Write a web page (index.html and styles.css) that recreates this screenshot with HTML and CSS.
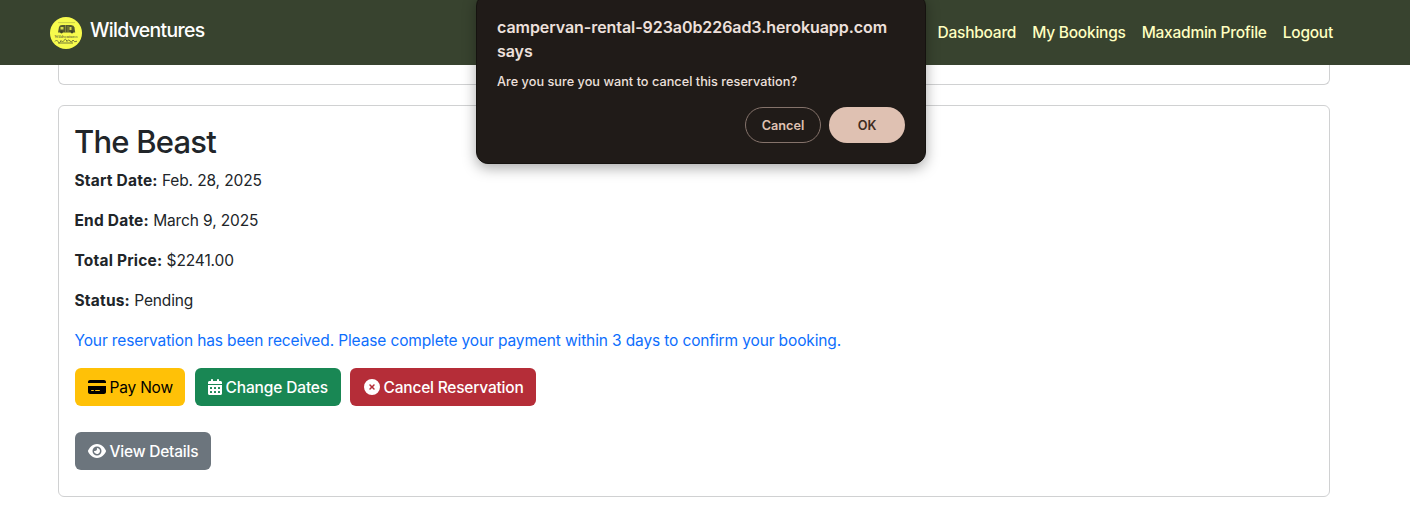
FILE: index.html
```html
<!DOCTYPE html>
<html lang="en">
<head>
<meta charset="utf-8">
<title>Wildventures</title>
<link rel="stylesheet" href="styles.css">
</head>
<body>
<header class="navbar">
  <a class="brand">
    <svg class="logo" viewBox="0 0 32 32">
      <circle cx="16" cy="16" r="16" fill="#f7fb4d"/>
      <path d="M8 5.600h17" stroke="#b9bd45" stroke-width=".7"/>
      <path d="M8 15.500l1-5.500q.5-1.800 3-2h9q3 .2 3.500 2.500l.7 5z" fill="#55592f"/>
      <path d="M10.500 10h3v2.500h-3zM19.500 10h2v3h-2z" fill="#d6da4b"/>
      <path d="M15.500 8v7M18 9v6" stroke="#92963c" stroke-width=".8"/>
      <circle cx="11.500" cy="15" r="1.400" fill="#3d4228"/><circle cx="22" cy="15" r="1.400" fill="#3d4228"/>
      <text x="16" y="20.800" text-anchor="middle" textLength="23" class="logo-text">Wildventures</text>
      <path d="M5 24.500q1.500-3 3 0t3-1q1.500 3 3 0t3 1q1.500-3 3-.5t3-1q1.500 3 4 1.200M8 26h15" fill="none" stroke="#6a6e34" stroke-width=".9"/>
    </svg>
    <span class="brand-name">Wildventures</span>
  </a>
  <nav class="links">
    <a>Dashboard</a><a>My Bookings</a><a>Maxadmin Profile</a><a>Logout</a>
  </nav>
</header>
<main class="container">
  <section class="card card-prev"></section>
  <section class="card">
    <h2>The Beast</h2>
    <p><strong>Start Date:</strong> Feb. 28, 2025</p>
    <p><strong>End Date:</strong> March 9, 2025</p>
    <p><strong>Total Price:</strong> $2241.00</p>
    <p><strong>Status:</strong> Pending</p>
    <p class="notice">Your reservation has been received. Please complete your payment within 3 days to confirm your booking.</p>
    <div class="actions">
      <button class="btn pay"><svg class="wide" viewBox="0 0 576 512"><path d="M64 32C28.700 32 0 60.700 0 96l0 32 576 0 0-32c0-35.300-28.700-64-64-64L64 32zM576 224L0 224 0 416c0 35.300 28.700 64 64 64l448 0c35.300 0 64-28.700 64-64l0-192zM112 352l64 0c8.800 0 16 7.200 16 16s-7.200 16-16 16l-64 0c-8.800 0-16-7.200-16-16s7.200-16 16-16zm112 16c0-8.800 7.200-16 16-16l128 0c8.800 0 16 7.200 16 16s-7.200 16-16 16l-128 0c-8.800 0-16-7.200-16-16z"/></svg><span>Pay Now</span></button>
      <button class="btn change"><svg class="narrow" viewBox="0 0 448 512"><path fill-rule="evenodd" d="M128 0c17.700 0 32 14.300 32 32v32h128V32c0-17.700 14.300-32 32-32s32 14.300 32 32v32h48c26.500 0 48 21.500 48 48v48H0v-48C0 85.500 21.500 64 48 64h48V32c0-17.700 14.300-32 32-32zM0 192h448v272c0 26.500-21.500 48-48 48H48c-26.500 0-48-21.500-48-48zM80 256a16 16 0 0 0-16 16v32a16 16 0 0 0 16 16h32a16 16 0 0 0 16-16v-32a16 16 0 0 0-16-16zm128 0a16 16 0 0 0-16 16v32a16 16 0 0 0 16 16h32a16 16 0 0 0 16-16v-32a16 16 0 0 0-16-16zm128 0a16 16 0 0 0-16 16v32a16 16 0 0 0 16 16h32a16 16 0 0 0 16-16v-32a16 16 0 0 0-16-16zM80 384a16 16 0 0 0-16 16v32a16 16 0 0 0 16 16h32a16 16 0 0 0 16-16v-32a16 16 0 0 0-16-16zm128 0a16 16 0 0 0-16 16v32a16 16 0 0 0 16 16h32a16 16 0 0 0 16-16v-32a16 16 0 0 0-16-16zm128 0a16 16 0 0 0-16 16v32a16 16 0 0 0 16 16h32a16 16 0 0 0 16-16v-32a16 16 0 0 0-16-16z"/></svg><span>Change Dates</span></button>
      <button class="btn cancel"><svg class="square" viewBox="0 0 512 512"><path d="M256 512A256 256 0 1 0 256 0a256 256 0 1 0 0 512zM175 175c9.400-9.400 24.600-9.400 33.900 0l47 47 47-47c9.400-9.400 24.600-9.400 33.900 0s9.400 24.600 0 33.900l-47 47 47 47c9.400 9.400 9.400 24.600 0 33.900s-24.600 9.400-33.900 0l-47-47-47 47c-9.400 9.400-24.600 9.400-33.900 0s-9.400-24.600 0-33.900l47-47-47-47c-9.400-9.400-9.400-24.600 0-33.900z"/></svg><span>Cancel Reservation</span></button>
    </div>
    <div class="actions">
      <button class="btn view"><svg class="wide" viewBox="0 0 576 512"><path d="M288 32c-80.800 0-145.500 36.800-192.600 80.600C48.600 156 17.300 208 2.500 243.700c-3.300 7.900-3.300 16.700 0 24.600C17.300 304 48.600 356 95.400 399.400C142.500 443.200 207.200 480 288 480s145.500-36.800 192.600-80.600c46.800-43.500 78.100-95.400 93-131.100c3.300-7.900 3.300-16.700 0-24.600c-14.900-35.700-46.200-87.700-93-131.100C433.500 68.800 368.800 32 288 32zM144 256a144 144 0 1 1 288 0 144 144 0 1 1 -288 0zm144-64c0 35.300-28.700 64-64 64c-7.100 0-13.900-1.200-20.300-3.300c-5.500-1.800-11.900 1.600-11.700 7.400c.3 6.900 1.300 13.800 3.200 20.700c13.700 51.200 66.400 81.600 117.600 67.900s81.600-66.400 67.900-117.600c-11.100-41.500-47.800-69.400-88.600-71.100c-5.800-.2-9.200 6.100-7.400 11.700c2.100 6.400 3.300 13.200 3.300 20.300z"/></svg><span>View Details</span></button>
    </div>
  </section>
</main>
<div class="dialog" role="dialog">
  <div class="dialog-title">campervan-rental-923a0b226ad3.herokuapp.com<br>says</div>
  <div class="dialog-text">Are you sure you want to cancel this reservation?</div>
  <div class="dialog-actions">
    <button class="pill outline">Cancel</button>
    <button class="pill filled">OK</button>
  </div>
</div>
</body>
</html>
```

FILE: styles.css
```css
* { box-sizing: border-box; }
body {
  margin: 0;
  height: 517px;
  overflow: hidden;
  background: #fff;
  color: #212529;
  font: 400 15.5px/24px Inter, "Liberation Sans", sans-serif;
  letter-spacing: -0.13px;
}
button { font: inherit; letter-spacing: inherit; white-space: nowrap; }
.navbar {
  height: 65px;
  padding: 0 77px 0 50px;
  background: #38432f;
  display: flex;
  justify-content: space-between;
  align-items: center;
}
.brand { display: flex; align-items: center; gap: 8px; color: #fff; }
.logo { width: 32px; height: 32px; display: block; margin-top: 1px; }
.logo-text { font: 700 4px "Liberation Serif", serif; letter-spacing: 0; fill: #7c803a; }
.brand-name { font-size: 19.4px; font-weight: 450; line-height: 30px; margin-top: -6px; letter-spacing: -0.66px; }
.links { display: flex; gap: 16px; color: #ffffc0; font-weight: 450; letter-spacing: -0.24px; }
.container { width: 1272px; margin-left: 58px; }
.card {
  height: 392px;
  padding: 17px 16px 16px;
  border: 1px solid #d0d1d2;
  border-radius: 6px;
}
.card-prev { height: 20px; margin-bottom: 20px; padding: 0; border-top: 0; border-radius: 0 0 6px 6px; }
h2 { margin: 0 0 8px; font-size: 31px; line-height: 38.4px; font-weight: 500; letter-spacing: -0.8px; text-indent: -1px; }
p { margin: 0 0 16px; white-space: nowrap; text-indent: -0.5px; }
.notice { margin-bottom: 15px; color: #0d6efd; }
strong { font-weight: 700; letter-spacing: 0.2px; }
.actions { display: flex; margin-bottom: 26px; }
.btn {
  height: 38px;
  padding: 0 0 0 12.500px;
  border: 0;
  border-radius: 6px;
  color: #fff;
  font-weight: 450;
  letter-spacing: -0.2px;
  display: flex;
  align-items: center;
  gap: 4px;
}
.btn span { padding-top: 2px; }
.btn svg { height: 16px; fill: currentColor; flex: none; }
.wide { width: 18px; }
.narrow { width: 14px; }
.square { width: 16px; }
.pay { width: 110px; margin-right: 10px; background: #ffc107; color: #000; font-weight: 400; }
.change { width: 146px; margin-right: 9px; background: #198754; letter-spacing: -0.14px; }
.cancel { width: 186px; padding-left: 13.500px; background: #b52d38; }
.view { width: 136px; background: #6c757d; }
.dialog {
  position: absolute;
  left: 476px;
  top: -6px;
  width: 450px;
  height: 170px;
  padding: 20px;
  border-radius: 12px;
  border: 1px solid #15120f;
  background: #201b18;
  color: #ede0dc;
  box-shadow: 0 4px 14px rgba(0, 0, 0, .34);
}
.dialog-title { font-size: 16px; line-height: 24px; font-weight: 600; letter-spacing: -0.06px; white-space: nowrap; }
.dialog-text { margin-top: 9px; font-size: 12.7px; font-weight: 450; line-height: 20px; letter-spacing: 0.03px; }
.dialog-actions { display: flex; justify-content: flex-end; gap: 8px; margin-top: 15px; }
.pill { width: 76px; height: 36px; padding: 2px 0 0; border-radius: 18px; font-size: 12.7px; font-weight: 600; letter-spacing: 0; }
.outline { border: 1px solid #85736b; background: transparent; color: #dfc1b2; }
.filled { border: 0; background: #dfc1b2; color: #3f2d23; }
```
